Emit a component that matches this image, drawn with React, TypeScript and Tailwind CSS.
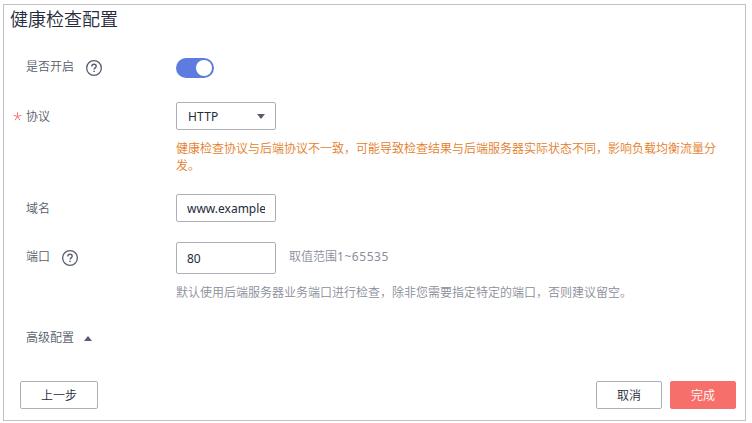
import type { ReactNode } from "react";

function HelpIcon() {
  return (
    <svg className="ml-3 h-4 w-4 shrink-0" viewBox="0 0 16 16" fill="none" stroke="#575d6c">
      <circle cx="8" cy="8" r="7.35" strokeWidth="1.3" />
      <path d="M5.8 6.4C5.8 5 6.7 4.3 8 4.3s2.2.8 2.2 2c0 1.5-2.1 1.7-2.1 3.3" strokeWidth="1.4" />
      <path d="M8.1 10.7v1.4" strokeWidth="1.5" />
    </svg>
  );
}

function Label({ children, required, help }: { children: ReactNode; required?: boolean; help?: boolean }) {
  return (
    <div className="flex w-[172px] shrink-0 items-center pl-[9px] font-[350] text-[#575d6c]">
      <span className="flex w-[13px] shrink-0 items-center">
        {required && (
          <svg className="h-[9px] w-[9px]" viewBox="0 0 9 9" fill="none" stroke="#f66f6a" strokeWidth="1">
            <path d="M4.5 .3v4.2M.6 3.3l3.9 1.2 3.9-1.2M2 8.2l2.5-3.7L7 8.2" />
          </svg>
        )}
      </span>
      <span className={help ? "pb-[2px]" : "pt-[2px]"}>{children}</span>
      {help && <HelpIcon />}
    </div>
  );
}

function Button({ children, className }: { children: ReactNode; className: string }) {
  return (
    <button type="button" className={`flex h-7 items-center justify-center rounded-[2px] border pt-[2px] font-[350] ${className}`}>
      {children}
    </button>
  );
}

export default function App() {
  return (
    <div className="h-[423px] w-[752px] bg-white pt-1 pl-[3px] font-['Noto_Sans','Noto_Sans_CJK_SC',sans-serif] text-[12px] leading-[18px] text-[#252b3a]">
      <main className="flex h-[417px] w-[743px] flex-col border border-[#c2c2c2]">
        <h1 className="mt-px pl-[6px] text-[18px] leading-[26px] font-[350]">健康检查配置</h1>

        <div className="mt-[26px] flex h-5">
          <Label help>是否开启</Label>
          <button type="button" role="switch" aria-checked="true" aria-label="是否开启" className="flex h-5 w-[38px] items-center justify-end rounded-full bg-[#5e7ce0] pr-[2px]">
            <span className="h-4 w-4 rounded-full bg-white" />
          </button>
        </div>

        <div className="mt-6 flex h-7">
          <Label required>协议</Label>
          <button type="button" className="flex w-[100px] items-center justify-between rounded-[2px] border border-[#adb0b8] pr-[10px] pl-[11px]">
            <span className="pt-[2px] tracking-[0.2px]">HTTP</span>
            <svg className="h-[5px] w-2" viewBox="0 0 8 5" fill="#575d6c"><path d="M0 0h8L4 5z" /></svg>
          </button>
        </div>
        <p className="mt-[10px] ml-[172px] w-[545px] leading-[17px] font-[350] text-[#e37d29]">
          健康检查协议与后端协议不一致，可能导致检查结果与后端服务器实际状态不同，影响负载均衡流量分发。
        </p>

        <div className="mt-5 flex h-7">
          <Label>域名</Label>
          <input readOnly aria-label="域名" value="www.example.com" className="w-[100px] rounded-[2px] border border-[#adb0b8] px-[10px] pt-[2px]" />
        </div>

        <div className="mt-5 flex h-8">
          <Label help>端口</Label>
          <input readOnly aria-label="端口" value="80" className="w-[100px] rounded-[2px] border border-[#adb0b8] px-[10px] pt-[2px]" />
          <span className="ml-[13px] self-center pb-[2px] text-[#8a8e99]"><span className="font-[350]">取值范围</span><span className="tracking-[0.55px]">1~65535</span></span>
        </div>
        <p className="mt-[10px] ml-[172px] font-[350] text-[#8a8e99]">默认使用后端服务器业务端口进行检查，除非您需要指定特定的端口，否则建议留空。</p>

        <div className="mt-[27px] ml-[22px] flex items-center font-[350] text-[#575d6c]">
          高级配置
          <svg className="ml-[10px] h-[5px] w-2" viewBox="0 0 8 5" fill="#575d6c"><path d="M0 5h8L4 0z" /></svg>
        </div>

        <footer className="mt-auto mb-[11px] flex gap-2 pr-[9px] pl-4">
          <Button className="mr-auto w-[78px] border-[#adb0b8]">上一步</Button>
          <Button className="w-[66px] border-[#adb0b8]">取消</Button>
          <Button className="w-[66px] border-[#f66f6a] bg-[#f66f6a] text-white">完成</Button>
        </footer>
      </main>
    </div>
  );
}
